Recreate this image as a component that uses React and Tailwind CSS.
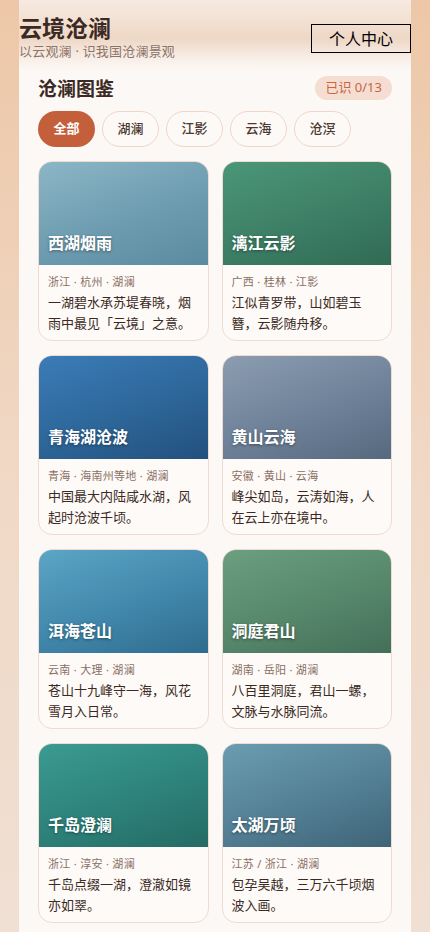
import React from "react";

const items = [
  { name: "西湖烟雨", meta: "浙江 · 杭州 · 湖澜", desc: "一湖碧水承苏堤春晓，烟雨中最见「云境」之意。", bg: "bg-[linear-gradient(160deg,#8cb6c6_0%,#6d9cb0_55%,#5b8ba0_100%)]" },
  { name: "漓江云影", meta: "广西 · 桂林 · 江影", desc: "江似青罗带，山如碧玉簪，云影随舟移。", bg: "bg-[linear-gradient(160deg,#4b9678_0%,#3d7f66_55%,#316a55_100%)]" },
  { name: "青海湖沧波", meta: "青海 · 海南州等地 · 湖澜", desc: "中国最大内陆咸水湖，风起时沧波千顷。", bg: "bg-[linear-gradient(160deg,#3b7cb7_0%,#2d6699_55%,#23507e_100%)]" },
  { name: "黄山云海", meta: "安徽 · 黄山 · 云海", desc: "峰尖如岛，云涛如海，人在云上亦在境中。", bg: "bg-[linear-gradient(160deg,#8c9db1_0%,#6e8198_55%,#56697f_100%)]" },
  { name: "洱海苍山", meta: "云南 · 大理 · 湖澜", desc: "苍山十九峰守一海，风花雪月入日常。", bg: "bg-[linear-gradient(160deg,#5ba5c6_0%,#4187ab_55%,#2f6c8d_100%)]" },
  { name: "洞庭君山", meta: "湖南 · 岳阳 · 湖澜", desc: "八百里洞庭，君山一螺，文脉与水脉同流。", bg: "bg-[linear-gradient(160deg,#6b9f80_0%,#56876b_55%,#446f59_100%)]" },
  { name: "千岛澄澜", meta: "浙江 · 淳安 · 湖澜", desc: "千岛点缀一湖，澄澈如镜亦如翠。", bg: "bg-[linear-gradient(160deg,#3b9b91_0%,#2d827a_55%,#246b64_100%)]" },
  { name: "太湖万顷", meta: "江苏 / 浙江 · 湖澜", desc: "包孕吴越，三万六千顷烟波入画。", bg: "bg-[linear-gradient(160deg,#6a9db1_0%,#537f94_55%,#3f6477_100%)]" },
  { name: "鄱阳渔歌", meta: "江西 · 九江 · 湖澜", desc: "候鸟南来，渔歌唱晚，湖天一色。", bg: "bg-[linear-gradient(160deg,#7aa6b8_0%,#5f8ea2_55%,#4a778c_100%)]" },
  { name: "长江三峡", meta: "重庆 / 湖北 · 江影", desc: "两岸猿声啼不住，轻舟已过万重山。", bg: "bg-[linear-gradient(160deg,#5f8f7c_0%,#4b7766_55%,#3a6254_100%)]" },
];

const tabs = ["全部", "湖澜", "江影", "云海", "沧溟"];

export default function App() {
  return (
    <div
      className="min-h-screen bg-[linear-gradient(180deg,#edc7a7_0%,#f0d8c5_40%,#f0e3da_100%)]"
      style={{ fontFamily: '"Noto Sans", "Noto Sans CJK SC", sans-serif' }}
    >
      <div className="mx-auto w-[392px] min-h-screen bg-[#fcf8f5]">
        <header className="flex items-start justify-between pt-[13px] pb-[8px] h-[70px] bg-[linear-gradient(180deg,#f7eae1_0%,#f2dfd1_35%,#eed7c6_55%,#f7ece4_80%,#fcf8f5_100%)]">
          <div className="flex flex-col">
            <h1 className="text-[23px] leading-[30px] font-bold text-[#3b2a23]">云境沧澜</h1>
            <p className="text-[13px] leading-[18px] text-[#8d7469] -mt-[1px] tracking-[0.2px]">以云观澜 · 识我国沧澜景观</p>
          </div>
          <button className="mt-[11px] h-[29px] w-[100px] border border-black text-[16px] leading-none text-black flex items-center justify-center">
            个人中心
          </button>
        </header>

        <main className="px-[19px] pb-10">
          <div className="flex items-center justify-between mt-[6px] h-[24px]">
            <h2 className="text-[19px] font-bold text-[#3b2a23] leading-[24px] mt-[2px]">沧澜图鉴</h2>
            <span className="h-[24px] px-[10px] rounded-full bg-[#f6ddd1] text-[#c9653f] text-[13px] flex items-center">已识 0/13</span>
          </div>

          <div className="flex gap-[7px] mt-[11px]">
            {tabs.map((t, i) => (
              <button
                key={t}
                className={
                  i === 0
                    ? "h-[36px] w-[57px] rounded-full bg-[#c45f3c] text-white text-[13px] font-bold flex items-center justify-center"
                    : "h-[36px] w-[57px] rounded-full border border-[#f0d6ca] bg-[#fdf9f6] text-[#4a3830] text-[13px] font-medium flex items-center justify-center"
                }
              >
                {t}
              </button>
            ))}
          </div>

          <div className="grid grid-cols-2 gap-x-[13px] gap-y-[14px] mt-[14px]">
            {items.map((it) => (
              <div key={it.name} className="rounded-[14px] border border-[#f0dbd1] bg-[#fdfaf8] overflow-hidden">
                <div className={`h-[103px] flex items-end px-[9px] pb-[11px] ${it.bg}`}>
                  <span className="text-white text-[16px] font-bold leading-[22px] [text-shadow:0_1px_3px_rgba(0,0,0,0.4)]">{it.name}</span>
                </div>
                <div className="px-[9px] pt-[9px] pb-[6px]">
                  <div className="text-[11px] leading-[16px] text-[#8a6f64] tracking-[0.3px]">{it.meta}</div>
                  <p className="mt-[2px] text-[13px] leading-[21px] text-[#3b2a23]">{it.desc}</p>
                </div>
              </div>
            ))}
          </div>
        </main>
      </div>
    </div>
  );
}
